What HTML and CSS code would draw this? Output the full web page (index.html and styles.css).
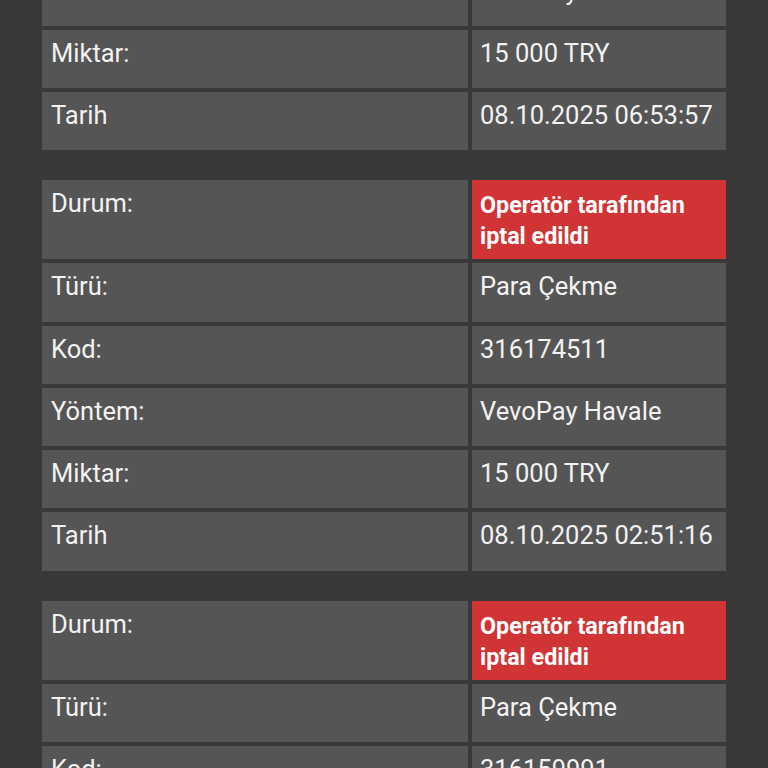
FILE: index.html
```html
<!DOCTYPE html>
<html lang="tr">
<head>
<meta charset="utf-8">
<link rel="stylesheet" href="styles.css">
</head>
<body>
<div class="page">
  <div class="list">
    <div class="tx">
      <div class="cell label">Durum:</div>
      <div class="cell status">Operatör tarafından iptal edildi</div>
      <div class="cell label">Türü:</div>
      <div class="cell">Para Çekme</div>
      <div class="cell label">Kod:</div>
      <div class="cell">316180245</div>
      <div class="cell label">Yöntem:</div>
      <div class="cell">VevoPay Havale</div>
      <div class="cell label">Miktar:</div>
      <div class="cell">15 000 TRY</div>
      <div class="cell label">Tarih</div>
      <div class="cell">08.10.2025 06:53:57</div>
    </div>
    <div class="tx">
      <div class="cell label">Durum:</div>
      <div class="cell status">Operatör tarafından iptal edildi</div>
      <div class="cell label">Türü:</div>
      <div class="cell">Para Çekme</div>
      <div class="cell label">Kod:</div>
      <div class="cell">316174511</div>
      <div class="cell label">Yöntem:</div>
      <div class="cell">VevoPay Havale</div>
      <div class="cell label">Miktar:</div>
      <div class="cell">15 000 TRY</div>
      <div class="cell label">Tarih</div>
      <div class="cell">08.10.2025 02:51:16</div>
    </div>
    <div class="tx">
      <div class="cell label">Durum:</div>
      <div class="cell status">Operatör tarafından iptal edildi</div>
      <div class="cell label">Türü:</div>
      <div class="cell">Para Çekme</div>
      <div class="cell label">Kod:</div>
      <div class="cell">316159991</div>
      <div class="cell label">Yöntem:</div>
      <div class="cell">VevoPay Havale</div>
      <div class="cell label">Miktar:</div>
      <div class="cell">15 000 TRY</div>
      <div class="cell label">Tarih</div>
      <div class="cell">08.10.2025 01:12:40</div>
    </div>
  </div>
</div>
</body>
</html>
```

FILE: styles.css
```css
html, body {
  margin: 0;
  padding: 0;
  background: #393939;
  height: 768px;
  overflow: hidden;
}
.page {
  padding: 0 42px;
  font-family: Roboto, "Liberation Sans", sans-serif;
  color: #f2f2f2;
}
.list {
  margin-top: -240px;
  display: flex;
  flex-direction: column;
  gap: 30px;
}
.tx {
  display: grid;
  grid-template-columns: 426px 254px;
  grid-template-rows: 79px repeat(5, 58.25px);
  gap: 4px;
}
.cell {
  background: #555555;
  padding: 8px 8px;
  font-size: 25.5px;
  line-height: 31px;
  box-sizing: border-box;
}
.label {
  padding-left: 9px;
}
.status {
  background: #d03434;
  color: #ffffff;
  font-weight: bold;
  font-size: 23.3px;
  padding: 10px 20px 7px 8px;
}
```
